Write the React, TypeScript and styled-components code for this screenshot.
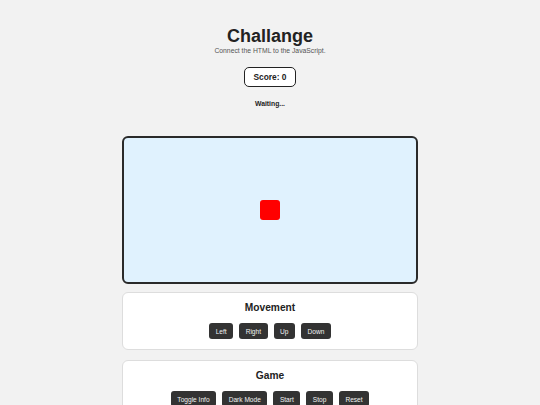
import React, { useState } from "react";
import styled, { createGlobalStyle } from "styled-components";

const GlobalStyle = createGlobalStyle`
    html, body {
        margin: 0;
        padding: 0;
        background: #f2f2f2;
        font-family: "Liberation Sans", Arial, sans-serif;
        color: #222;
    }
`

const Page = styled.div`
    display: flex;
    flex-direction: column;
    align-items: center;
    padding-top: 26px;
`

const Title = styled.h1`
    margin: 0;
    font-size: 18px;
    line-height: 20px;
    font-weight: 700;
    color: #222;
`

const Subtitle = styled.p`
    margin: 1px 0 0;
    font-size: 6.8px;
    line-height: 8px;
    color: #555;
`

const Score = styled.div`
    margin-top: 12px;
    box-sizing: border-box;
    height: 20px;
    padding: 0 8px;
    display: flex;
    align-items: center;
    border: 1.5px solid #222;
    border-radius: 5px;
    background: #fff;
    font-size: 8.4px;
    font-weight: 700;
`

const Status = styled.div`
    margin-top: 13px;
    font-size: 6.8px;
    line-height: 8px;
    font-weight: 700;
    color: #222;
`

const Board = styled.div`
    margin-top: 28px;
    box-sizing: border-box;
    width: 296px;
    height: 148px;
    border: 2px solid #2a2a2a;
    border-radius: 6px;
    background: #e0f2fe;
    display: flex;
    align-items: center;
    justify-content: center;
`

const Player = styled.div`
    width: 20px;
    height: 20px;
    border-radius: 3px;
    background: #ff0000;
`

const Card = styled.section<{ $gap: number }>`
    margin-top: ${(p) => p.$gap}px;
    box-sizing: border-box;
    width: 296px;
    padding: 9px 0 10px;
    background: #fff;
    border: 1px solid #ddd;
    border-radius: 6px;
    display: flex;
    flex-direction: column;
    align-items: center;
`

const CardTitle = styled.h2`
    margin: 0;
    font-size: 10.2px;
    line-height: 12px;
    font-weight: 700;
`

const Buttons = styled.div`
    margin-top: 9px;
    display: flex;
    gap: 6px;
`

const Button = styled.button`
    height: 16px;
    padding: 0 6.5px;
    border: none;
    border-radius: 3px;
    background: #333;
    color: #f2f2f2;
    font-family: "Liberation Sans", Arial, sans-serif;
    font-size: 6.6px;
    cursor: pointer;
`

export default function App() {
    const [score] = useState(0)
    return (
        <Page>
            <GlobalStyle />
            <Title>Challange</Title>
            <Subtitle>Connect the HTML to the JavaScript.</Subtitle>
            <Score>Score: {score}</Score>
            <Status>Waiting...</Status>
            <Board>
                <Player />
            </Board>
            <Card $gap={8}>
                <CardTitle>Movement</CardTitle>
                <Buttons>
                    {["Left", "Right", "Up", "Down"].map((b) => <Button key={b}>{b}</Button>)}
                </Buttons>
            </Card>
            <Card $gap={10}>
                <CardTitle>Game</CardTitle>
                <Buttons>
                    {["Toggle Info", "Dark Mode", "Start", "Stop", "Reset"].map((b) => <Button key={b}>{b}</Button>)}
                </Buttons>
            </Card>
        </Page>
    )
}
